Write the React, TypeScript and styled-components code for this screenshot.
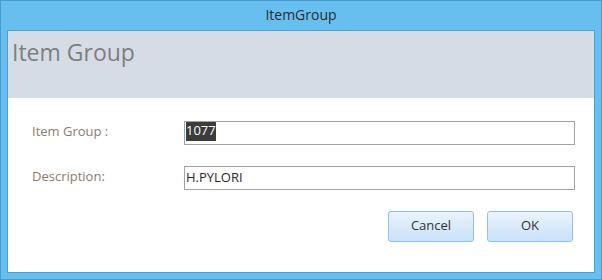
import React from "react";
import styled, { createGlobalStyle } from "styled-components";

const Global = createGlobalStyle`
  html, body { margin: 0; padding: 0; background: #ffffff; }
  body { font-family: "Open Sans", "Noto Sans", sans-serif; }
`;

const Window = styled.div`
  width: 602px;
  height: 280px;
  box-sizing: border-box;
  border: 1px solid #4a9ace;
  background: #67bff0;
  display: flex;
  flex-direction: column;
`;

const TitleBar = styled.div`
  height: 29px;
  display: flex;
  align-items: center;
  justify-content: center;
  font-size: 14px;
  color: #2b2b2b;
  padding-bottom: 2px;
  box-sizing: border-box;
`;

const Client = styled.div`
  flex: 1;
  margin: 0 6px 6px 6px;
  border: 1px solid #4f9fd3;
  background: #ffffff;
  display: flex;
  flex-direction: column;
`;

const Header = styled.div`
  height: 67px;
  background: #d5dce6;
  padding: 6px 0 0 4px;
  box-sizing: border-box;
  font-size: 23px;
  color: #7f7f7f;
  line-height: 30px;
`;

const Form = styled.div`
  display: flex;
  flex-direction: column;
  gap: 21px;
  padding: 23px 19px 0 24px;
`;

const Row = styled.div`
  display: flex;
  align-items: center;
`;

const Label = styled.div`
  width: 152px;
  font-size: 13px;
  color: #8b7d70;
  padding-bottom: 4px;
`;

const Field = styled.div`
  flex: 1;
  height: 24px;
  box-sizing: border-box;
  border: 1px solid #a3a3a3;
  display: flex;
  align-items: center;
  padding: 0 1px 2px 1px;
  font-size: 13px;
  color: #2a2a2a;
`;

const Selected = styled.span`
  background: #3c3c3c;
  color: #ffffff;
  height: 19px;
  line-height: 17px;
  align-self: flex-start;
`;

const Buttons = styled.div`
  display: flex;
  justify-content: flex-end;
  gap: 13px;
  padding: 21px 21px 0 0;
`;

const Button = styled.button`
  width: 86px;
  height: 31px;
  border: 1px solid #94bfe8;
  border-radius: 3px;
  background: linear-gradient(#eaf3fd, #c9e1f9);
  font-family: "Open Sans", "Noto Sans", sans-serif;
  font-size: 13px;
  color: #333333;
  padding: 0 0 3px 0;
`;

export default function App() {
  return (
    <>
      <Global />
      <Window>
        <TitleBar>ItemGroup</TitleBar>
        <Client>
          <Header>Item Group</Header>
          <Form>
            <Row>
              <Label>Item Group :</Label>
              <Field>
                <Selected>1077</Selected>
              </Field>
            </Row>
            <Row>
              <Label>Description:</Label>
              <Field>H.PYLORI</Field>
            </Row>
          </Form>
          <Buttons>
            <Button>Cancel</Button>
            <Button>OK</Button>
          </Buttons>
        </Client>
      </Window>
    </>
  );
}
